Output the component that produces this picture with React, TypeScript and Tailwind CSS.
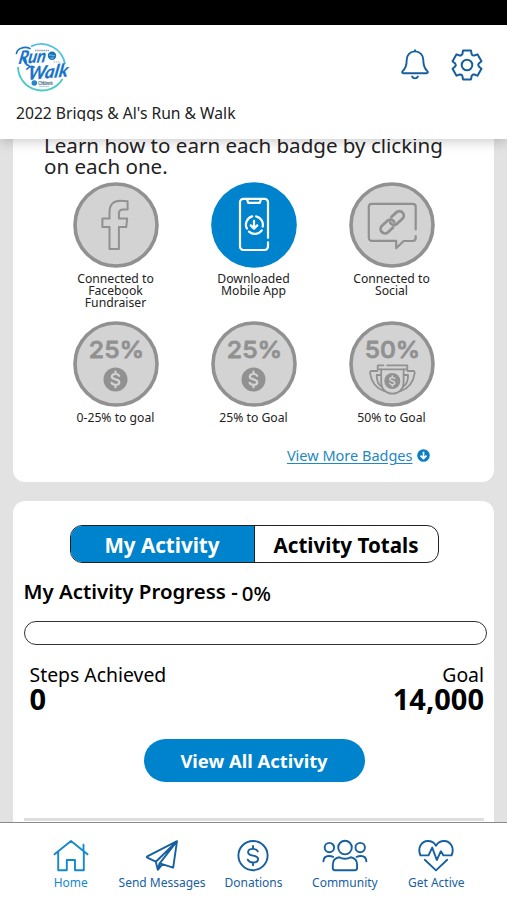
import type { ReactNode } from "react";

const FONT = "font-['Noto_Sans','Open_Sans',sans-serif]";

function Logo() {
  return (
    <svg width="56" height="52" viewBox="0 0 56 52" fill="none" className="overflow-visible">
      <path d="M17 4.400A24 24 0 0 1 51 22" stroke="#52bfe0" strokeWidth="1.900" />
      <path d="M4 25A24 24 0 0 0 48.500 37" stroke="#4fc8c8" strokeWidth="1.900" />
      <g fill="#1673c8" stroke="#1673c8" strokeWidth=".2" fontFamily="Lato, sans-serif" fontStyle="italic" fontWeight="700">
        <text fontSize="18" textLength="27" lengthAdjust="spacingAndGlyphs" transform="translate(4 22) rotate(-4) skewX(-14)">Run</text>
        <text fontSize="18" textLength="40" lengthAdjust="spacingAndGlyphs" transform="translate(13.500 38) rotate(-5) skewX(-14)">Walk</text>
      </g>
      <path d="M2.500 11.500C3 6.500 10 4 16 6.500M9 17c2 2 2 6 6 6.500M13 27c2-2.500 5-3 7-2" stroke="#1673c8" strokeWidth="1.700" strokeLinecap="round" />
      <circle cx="38" cy="13.800" r="4.200" fill="#1673b8" />
      <path d="M35.200 13.500c2-2 4 2 5.800-.5M36.500 16h3" stroke="#bfe3f5" strokeWidth=".8" />
      <path d="M21 8.500h14" stroke="#9aa5ad" strokeWidth="1.400" strokeDasharray="1.600 .5" />
      <path d="M39.500 20h7" stroke="#9fb5c5" strokeWidth="1.200" strokeDasharray="1.500 .7" />
      <circle cx="20.300" cy="41" r="2.800" fill="#2386cf" />
      <text x="24" y="42.500" fontSize="5" fontFamily="Lato, sans-serif" fontWeight="700" fill="#5f7d91" textLength="15">Children's</text>
      <path d="M25 44.300h10" stroke="#8acbe8" strokeWidth=".9" />
    </svg>
  );
}

function BellIcon() {
  return (
    <svg width="28" height="31" viewBox="0 0 28 31" fill="none" stroke="#175e9f" strokeWidth="1.900" strokeLinecap="round" strokeLinejoin="round">
      <path d="M14 1.200v1.200M14 2.400c-5 0-8.300 3.700-8.300 8.600 0 6-1 8.300-4 11.100-1 1-.6 2.200.7 2.200h23.200c1.300 0 1.700-1.200.7-2.200-3-2.800-4-5.100-4-11.100 0-4.900-3.300-8.600-8.300-8.600Z" />
      <path d="M11.100 27.500c.6 1.300 1.600 1.900 2.900 1.900s2.300-.6 2.900-1.900" />
    </svg>
  );
}

// one tooth is described pointing up, then turned six times
const TOOTH = [[-4.6, -11], [-4, -14.4], [4, -14.4], [4.6, -11], [5.4, -9.8]];
const gearPoints = [0, 60, 120, 180, 240, 300]
  .flatMap((deg) => {
    const a = (deg * Math.PI) / 180;
    return TOOTH.map(([x, y]) => `${(x * Math.cos(a) - y * Math.sin(a)).toFixed(2)},${(x * Math.sin(a) + y * Math.cos(a)).toFixed(2)}`);
  })
  .join(" ");

function GearIcon() {
  return (
    <svg width="32" height="32" viewBox="-16 -16 32 32" fill="none" stroke="#175e9f" strokeWidth="2" strokeLinejoin="round">
      <polygon points={gearPoints} />
      <circle r="5.300" />
    </svg>
  );
}

function Coin({ cx, cy, r }: { cx: number; cy: number; r: number }) {
  const k = r / 12;
  return (
    <g transform={`translate(${cx} ${cy}) scale(${k})`}>
      <circle r="12" fill="#919191" />
      <path d="M3.600-3.600C2.900-5 1.600-5.400 0-5.400c-2.200 0-3.700 1-3.700 2.700C-3.700.9 3.800-.9 3.800 2.800 3.800 4.500 2.200 5.500 0 5.500c-1.900 0-3.200-.6-3.900-2.100M0-7.700v2.300M0 5.500v2.300" fill="none" stroke="#d3d3d3" strokeWidth="2.200" strokeLinecap="round" />
    </g>
  );
}

function Percent({ children }: { children: ReactNode }) {
  return (
    <text x="15.800" y="36.800" fontSize="23.500" fontWeight="500" fontFamily="Inter, sans-serif" fill="#919191" stroke="#919191" strokeWidth=".8" strokeLinejoin="round" textLength="55.500" lengthAdjust="spacingAndGlyphs">
      {children}
    </text>
  );
}

function BadgeCircle({ active, children }: { active?: boolean; children: ReactNode }) {
  return (
    <svg width="86" height="86" viewBox="0 0 86 86" fill="none" stroke="none">
      {active ? (
        <circle cx="43" cy="43" r="42.800" fill="#0083cd" />
      ) : (
        <circle cx="43" cy="43" r="41" fill="#d3d3d3" stroke="#919191" strokeWidth="3.600" />
      )}
      {children}
    </svg>
  );
}

const facebookArt = (
  <path d="M54.600 19.200v8.200h-4.300c-3.300 0-4.400 1.400-4.400 4.300v4.800h8.300l-1 8.600h-7.300V67h-9.400V45.100h-7.100v-8.600h7.100v-6.300c0-7.200 4.100-11.400 10.700-11.400 2.700 0 5.600.1 7.400.4Z" stroke="#919191" strokeWidth="2" strokeLinejoin="round" />
);

const phoneArt = (
  <g stroke="#fff" strokeWidth="2.200" strokeLinecap="round" strokeLinejoin="round">
    <path d="M57 55.800V20.200a3.400 3.400 0 0 0-3.400-3.400H32.400a3.400 3.400 0 0 0-3.400 3.400v44.400a3.400 3.400 0 0 0 3.400 3.400h21.200a3.400 3.400 0 0 0 3.400-3.400v-4.200" />
    <path d="M36 17.200l1.200 3.600h11.600l1.200-3.600" />
    <path d="M41.200 34.400a8.600 8.600 0 0 0-5.300 12.200M38 49.600a8.600 8.600 0 0 0 12.800-1.300M51.700 44.600a8.600 8.600 0 0 0-6.600-10.300" />
    <path d="M43 38.800v7.500M39.800 43.400l3.200 3.200 3.200-3.200" />
  </g>
);

const socialArt = (
  <g stroke="#919191" strokeWidth="2.200" strokeLinecap="round" strokeLinejoin="round">
    <path d="M66.700 47.500V24.800a3 3 0 0 0-3-3H22.800a3 3 0 0 0-3 3v31a3 3 0 0 0 3 3h24.400v7.400l7.400-7.200h9c2 0 3.100-1.300 3.100-3.200v-1.700" />
    <g transform="translate(43.200 40.300) rotate(-43)" strokeWidth="2.800">
      <path d="M-3 4.400h-6.800a4.400 4.400 0 0 1 0-8.800h7.300a4.400 4.400 0 0 1 4.200 5.600" />
      <path d="M3-4.400h6.800a4.400 4.400 0 0 1 0 8.800H2.500a4.400 4.400 0 0 1-4.200-5.600" />
    </g>
  </g>
);

const trophyArt = (
  <>
    <g stroke="#919191" strokeWidth="1.800" strokeLinecap="round" strokeLinejoin="round">
      <path d="M34.500 44.300h-5.800v4h29.600v-4H38" />
      <path d="M32.200 48.500v13.200c0 6.300 5 11 11.200 11s11.200-4.700 11.200-11V48.500" />
      <path d="M32 54h-4.300c0 6.500 1.400 9.600 4.900 11.700M28.300 50h-5.600c-1.400 0-1.800 1-1.500 2.600 1.400 9 5.200 14.700 14.200 17.600" />
      <path d="M54.800 54h4.300c0 6.500-1.400 9.600-4.900 11.700M58.500 50h5.600c1.400 0 1.800 1 1.500 2.600-1.400 9-5.200 14.700-14.200 17.600" />
    </g>
    <Coin cx={43.3} cy={60} r={8} />
  </>
);

const badges = [
  { lines: ["Connected to", "Facebook", "Fundraiser"], art: facebookArt },
  { lines: ["Downloaded", "Mobile App"], art: phoneArt, active: true },
  { lines: ["Connected to", "Social"], art: socialArt },
  { lines: ["0-25% to goal"], art: <><Percent>25%</Percent><Coin cx={42.5} cy={58.4} r={12} /></> },
  { lines: ["25% to Goal"], art: <><Percent>25%</Percent><Coin cx={42.5} cy={58.4} r={12} /></> },
  { lines: ["50% to Goal"], art: <><Percent>50%</Percent>{trophyArt}</> },
];

const navItems = [
  {
    label: "Home",
    active: true,
    icon: <path d="M1.500 14.300 18 1l16.500 13.300M30.500 10V4.800M5.200 11.500V30.300h8.600V20h8.200v10.300h8.800V11.500" />,
  },
  {
    label: "Send Messages",
    icon: <path d="M33 1.200 3.300 16.300c-.6.4-.6 1 0 1.400l8.500 4L33 1.200l-3.800 26.500-13.500-4.400L33 1.200M11.800 21.700l2 8.100 4.600-5.600M13.800 29.800l1.800-6.500" />,
  },
  {
    label: "Donations",
    icon: (
      <>
        <circle cx="18" cy="15.600" r="14.600" />
        <path d="M22.800 11.400c-.8-1.800-2.500-2.500-4.800-2.500-2.900 0-4.900 1.200-4.900 3.300 0 4.800 10 2 10 6.800 0 2.200-2.100 3.500-5.100 3.500-2.600 0-4.400-.9-5.200-2.800M18 6v2.900M18 22.500v2.800" />
      </>
    ),
  },
  {
    label: "Community",
    icon: (
      <>
        <circle cx="18" cy="7.600" r="6.800" />
        <circle cx="2.400" cy="7.600" r="4.700" />
        <circle cx="33.200" cy="7.600" r="4.700" />
        <path d="M12.300 17.300c3 1.900 8.400 1.900 11.400 0 3.700.6 6.400 3.300 6.400 7.400v3.400c0 1.500-.8 2.200-2.200 2.200H8c-1.400 0-2.200-.7-2.200-2.200v-3.400c0-4.100 2.800-6.800 6.500-7.400Z" />
        <path d="M-3.600 21.400c.2-3.400 2.500-5.400 5.400-5.400 1.600 0 3 .2 4.400.8M39.400 21.400c-.2-3.400-2.500-5.400-5.400-5.400-1.600 0-3 .2-4.400.8" />
      </>
    ),
  },
  {
    label: "Get Active",
    icon: (
      <>
        <path d="M2.400 15.400C-.8 7.700 3.600 1 9.800 1c3.700 0 6.500 1.700 8.200 4.700C19.700 2.700 22.500 1 26.200 1c6.200 0 10.600 6.700 7.400 14.400H25.500l-2.600-4.200-4.100 8.800-4.600-12.400-3.700 7.800Z" />
        <path d="M6.800 19.800 18 30.400l11.200-10.600" />
      </>
    ),
  },
];

export default function App() {
  return (
    <div className={`flex h-[900px] w-[507px] flex-col overflow-hidden bg-white text-[#222] ${FONT}`}>
      <div className="h-[25px] shrink-0 bg-black" />

      <header className="z-10 h-[114px] shrink-0 bg-white pt-[17px] pl-4 shadow-[0_2px_12px_rgba(0,0,0,0.22)]">
        <div className="flex h-[52px] justify-between pr-6">
          <div className="-ml-[2px]">
            <Logo />
          </div>
          <div className="flex items-start gap-[22px] pt-[7px]">
            <BellIcon />
            <GearIcon />
          </div>
        </div>
        <h1 className="mt-[7px] h-[20px] overflow-hidden text-[15.650px] leading-[24px] text-[#222]">2022 Briggs &amp; Al's Run &amp; Walk</h1>
      </header>

      <main className="flex h-[683px] shrink-0 flex-col gap-[19px] overflow-hidden bg-[#e2e2e2] px-[13px]">
        <section className="h-[343px] shrink-0 rounded-b-xl bg-white">
          <p className="pl-[31px] text-[20.550px] leading-[20.700px]">
            <span className="-mt-[4px] block">Learn how to earn each badge by clicking</span>
            on each one.
          </p>
          <div className="mt-[6px] grid grid-cols-[138px_138px_138px] grid-rows-[139px_123px] pl-[33.500px]">
            {badges.map((badge, i) => (
              <div key={i} className="flex flex-col items-center">
                <BadgeCircle active={badge.active}>{badge.art}</BadgeCircle>
                <div className="mt-[5px] text-center text-[12.200px] leading-[12px]">
                  {badge.lines.map((line) => (
                    <div key={line}>{line}</div>
                  ))}
                </div>
              </div>
            ))}
          </div>
          <div className="flex items-center justify-end gap-1 pr-[64.500px] text-[14.500px] leading-[22px] text-[#2487c4]">
            <a className="underline underline-offset-2">View More Badges</a>
            <svg width="13" height="13" viewBox="0 0 13 13" fill="none">
              <circle cx="6.500" cy="6.500" r="6.300" fill="#0b7fc4" />
              <path d="M6.500 2.800v6.600M3.500 6.600l3 3 3-3" stroke="#fff" strokeWidth="1.700" />
            </svg>
          </div>
        </section>

        <section className="h-[340px] shrink-0 rounded-t-xl bg-white pt-[24px] pr-[7px] pl-[10.500px] text-black">
          <div className="ml-[46px] flex h-[38px] w-[369px] overflow-hidden rounded-xl border border-[#222] text-[20.600px] leading-[38px] font-bold">
            <div className="w-[184px] border-r border-[#222] bg-[#0083cd] text-center text-white">My Activity</div>
            <div className="flex-1 text-center">Activity Totals</div>
          </div>
          <div className="mt-[14px] flex h-[30px] text-[20.450px] leading-[29px]">
            <span className="font-semibold">My Activity Progress -</span>
            <span className="ml-[4px] pt-[2px] text-[20.500px] font-medium">0%</span>
          </div>
          <div className="mt-[14px] h-[24px] rounded-full border-[1.500px] border-[#333]" />
          <div className="mt-[18px] flex justify-between pr-[3px] pl-[6px]">
            <div>
              <div className="text-[19.400px] leading-[24px]">Steps Achieved</div>
              <div className="-mt-px text-[29px] leading-[26px] font-bold">0</div>
            </div>
            <div className="text-right">
              <div className="text-[19.400px] leading-[24px]">Goal</div>
              <div className="-mt-px text-[29px] leading-[26px] font-bold">14,000</div>
            </div>
          </div>
          <button className="mt-[27px] ml-[120px] block h-[43px] w-[221px] rounded-full bg-[#0083cd] text-[18.400px] leading-[41px] font-bold text-white">View All Activity</button>
          <div className="mt-[36px] h-[3px] w-[460px] bg-[#dedede]" />
        </section>
      </main>

      <nav className="grid h-[78px] shrink-0 grid-cols-5 border-t border-[#8a8a8a] bg-white pt-[17px] pr-[25px] pl-[25px]">
        {navItems.map((item) => (
          <a key={item.label} className={`flex flex-col items-center ${item.active ? "text-[#1489ce]" : "text-[#17609f]"}`}>
            <svg width="36" height="32" viewBox="0 0 36 32" fill="none" stroke="currentColor" strokeWidth="1.900" strokeLinecap="round" strokeLinejoin="round" className="overflow-visible">
              {item.icon}
            </svg>
            <span className="mt-[2px] text-[12px] leading-[18px] whitespace-nowrap">{item.label}</span>
          </a>
        ))}
      </nav>
    </div>
  );
}
